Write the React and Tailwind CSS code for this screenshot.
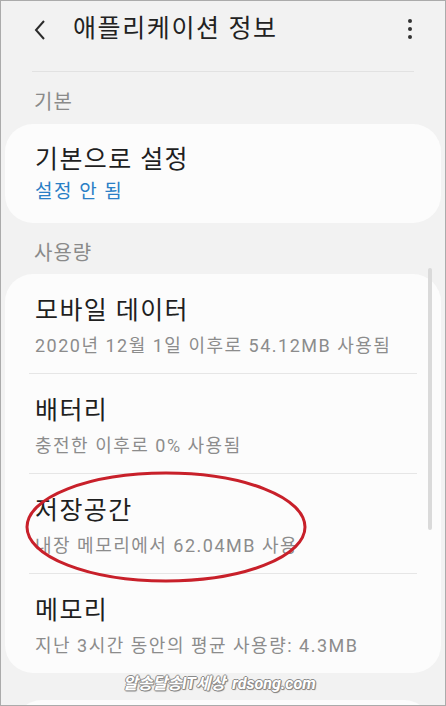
import React from "react";

const font = "font-['Roboto','Noto_Sans_CJK_KR',sans-serif]";

const UsageItem = ({ title, sub, last }) => (
  <div className={`mx-6 ${last ? "" : "border-b border-[#e6e6e6]"}`}>
    <div className="pt-[21px] pb-[16px] px-[6px] flex flex-col gap-2">
      <p className="text-[25px] leading-[32px] text-[#1f1f1f] tracking-[1.4px]">{title}</p>
      <p className="text-[18px] leading-[22px] text-[#8c8c8c] tracking-[1.5px]">{sub}</p>
    </div>
  </div>
);

export default function App() {
  return (
    <div
      className={`relative w-[446px] h-[706px] overflow-hidden bg-[#f2f2f2] border border-[#ababab] ${font}`}
    >
      {/* header */}
      <div className="h-[56px] flex items-center px-[30px]">
        <svg width="20" height="24" viewBox="0 0 20 24" className="mt-[1px]">
          <path d="M13 3 L5 12 L13 21" fill="none" stroke="#2b2b2b" strokeWidth="2" />
        </svg>
        <h1 className="ml-[22px] text-[25px] text-[#222] tracking-[1.6px]">애플리케이션 정보</h1>
        <div className="ml-auto mr-[3px] flex flex-col gap-[4px] items-center">
          <span className="w-[4px] h-[4px] rounded-full bg-[#333]" />
          <span className="w-[4px] h-[4px] rounded-full bg-[#333]" />
          <span className="w-[4px] h-[4px] rounded-full bg-[#333]" />
        </div>
      </div>
      <div className="mx-[31px] mt-[14px] border-t border-[#e2e2e2]" />

      {/* 기본 */}
      <p className="px-[33px] pt-[17px] pb-[9px] text-[20px] leading-[26px] text-[#8a8a8a] tracking-[1px]">기본</p>
      <div className="mx-[4px] rounded-[28px] bg-[#fcfcfc] px-[30px] pt-[20px] pb-[19px] flex flex-col gap-[3px]">
        <p className="text-[25px] leading-[32px] text-[#1f1f1f] tracking-[1.4px]">기본으로 설정</p>
        <p className="text-[19px] leading-[25px] text-[#2a7fc6] tracking-[1.5px]">설정 안 됨</p>
      </div>

      {/* 사용량 */}
      <p className="px-[33px] pt-[17px] pb-[8px] text-[20px] leading-[26px] text-[#8a8a8a] tracking-[1px]">사용량</p>
      <div className="mx-[4px] rounded-[28px] bg-[#fcfcfc] flex flex-col">
        <UsageItem title="모바일 데이터" sub="2020년 12월 1일 이후로 54.12MB 사용됨" />
        <UsageItem title="배터리" sub="충전한 이후로 0% 사용됨" />
        <UsageItem title="저장공간" sub="내장 메모리에서 62.04MB 사용" />
        <UsageItem title="메모리" sub="지난 3시간 동안의 평균 사용량: 4.3MB" last />
      </div>

      <div className="mx-[13px] mt-[27px] h-[60px] rounded-[28px] bg-[#fcfcfc]" />

      {/* scrollbar */}
      <div className="absolute left-[427px] top-[267px] w-[4px] h-[262px] rounded-full bg-[#dadada]" />

      {/* red annotation ellipse */}
      <svg className="absolute left-0 top-0" width="446" height="706">
        <ellipse cx="165" cy="526" rx="139" ry="54" fill="none" stroke="#c8202a" strokeWidth="3" />
      </svg>

      {/* watermark */}
      <p className="absolute left-[122px] top-[672px] flex gap-[7px] text-[16px] leading-[22px] font-bold italic text-white [text-shadow:1px_0_0_#8a8a8a,-1px_0_0_#8a8a8a,0_1px_0_#8a8a8a,0_-1px_0_#8a8a8a,1px_1px_1px_#777]">
        <span>알송달송IT세상</span>
        <span>rdsong.com</span>
      </p>
    </div>
  );
}
